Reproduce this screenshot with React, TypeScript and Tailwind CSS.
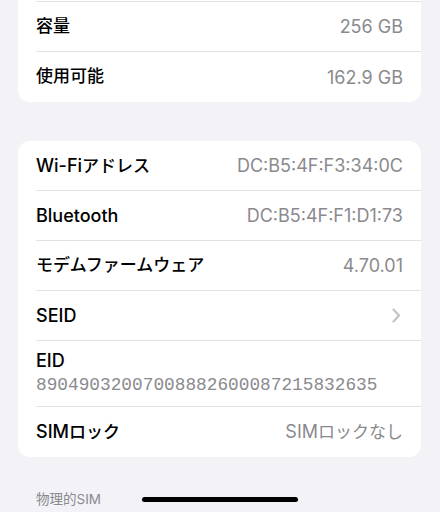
type Row = { label: string; value?: string; chevron?: boolean };

const storage: Row[] = [
  { label: "容量", value: "256 GB" },
  { label: "使用可能", value: "162.9 GB" },
];

const network: Row[] = [
  { label: "Wi-Fiアドレス", value: "DC:B5:4F:F3:34:0C" },
  { label: "Bluetooth", value: "DC:B5:4F:F1:D1:73" },
  { label: "モデムファームウェア", value: "4.70.01" },
  { label: "SEID", chevron: true },
];

// latin runs render a touch larger than kana/kanji, like SF Pro next to Hiragino
function Mixed({ text }: { text: string }) {
  const parts = text.match(/[\x00-\x7f]+|[^\x00-\x7f]+/g) ?? [];
  return (
    <>
      {parts.map((p, i) =>
        /^[\x00-\x7f]+$/.test(p) ? (
          <span key={i} className="text-[18px]">{p}</span>
        ) : (
          <span key={i} className="text-[17px]">{p}</span>
        )
      )}
    </>
  );
}

function Chevron() {
  return (
    <svg width="9" height="15" viewBox="0 0 9 15" fill="none">
      <path d="M1.5 1.5 L7 7.5 L1.5 13.5" stroke="#c4c4c7" strokeWidth="2.2" strokeLinecap="round" strokeLinejoin="round" />
    </svg>
  );
}

function ListRow({ row, last }: { row: Row; last?: boolean }) {
  return (
    <div className="pl-[18px]">
      <div className={`flex items-center justify-between h-[50px] pr-[18px] ${last ? "" : "border-b border-[#e3e3e6]"}`}>
        <span className="font-medium text-black"><Mixed text={row.label} /></span>
        {row.chevron ? (
          <span className="pr-[2px]"><Chevron /></span>
        ) : (
          <span className="text-[#8a8a8e]"><Mixed text={row.value ?? ""} /></span>
        )}
      </div>
    </div>
  );
}

export default function App() {
  return (
    <div
      className="relative w-[440px] h-[512px] overflow-hidden bg-[#f2f2f7]"
      style={{ fontFamily: '"Inter", "Noto Sans CJK JP", sans-serif' }}
    >
      <div className="pl-[18px] pr-[19px]">
        {/* storage card, its first row sits above the viewport */}
        <div className="-mt-[50px] bg-white rounded-[12px] overflow-hidden">
          <div className="pl-[18px]">
            <div className="h-[52px] border-b border-[#e3e3e6]" />
          </div>
          {storage.map((r, i) => (
            <ListRow key={r.label} row={r} last={i === storage.length - 1} />
          ))}
        </div>

        {/* network card */}
        <div className="mt-[39px] bg-white rounded-[12px] overflow-hidden">
          {network.map((r) => (
            <ListRow key={r.label} row={r} />
          ))}
          <div className="pl-[18px]">
            <div className="h-[66px] border-b border-[#e3e3e6] pt-[8px]">
              <div className="text-[18px] font-medium text-black leading-[24px]">EID</div>
              <div
                className="text-[17.8px] text-[#8a8a8e] leading-[24px]"
                style={{ fontFamily: '"Liberation Mono", monospace' }}
              >
                89049032007008882600087215832635
              </div>
            </div>
          </div>
          <ListRow row={{ label: "SIMロック", value: "SIMロックなし" }} last />
        </div>

        {/* physical SIM header */}
        <div className="pt-[34px] pl-[18px] text-[13.5px] text-[#8a8a8e] leading-[16px]">物理的SIM</div>
        <div className="mt-[7px] bg-white rounded-[12px] h-[60px]" />
      </div>

      {/* home indicator */}
      <div className="absolute left-[142px] top-[497px] w-[156px] h-[5px] rounded-full bg-black" />
    </div>
  );
}
